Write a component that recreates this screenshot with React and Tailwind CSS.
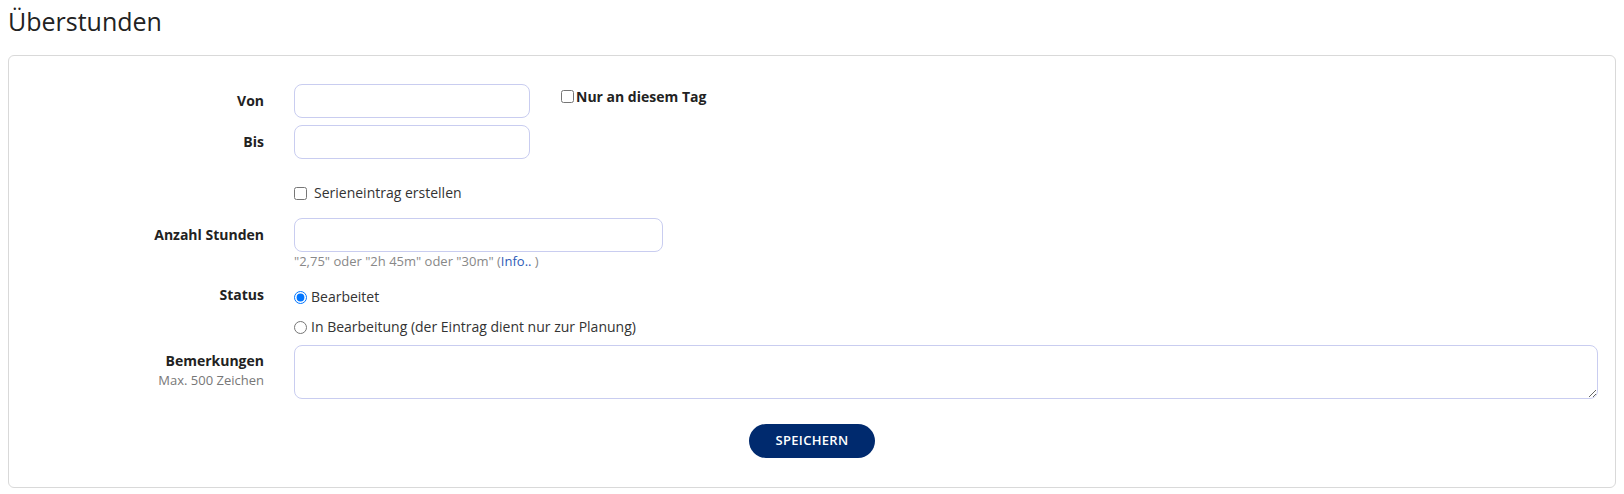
import React, { useState } from 'react';

const inputCls = 'h-[34px] rounded-lg border border-[#c9cdf0] bg-white px-3 text-sm outline-none focus:border-[#8f9be6]';

function Row({ label, sub, className = '', labelCls = 'pt-[7px]', children }) {
  return (
    <div className={`flex items-start ${className}`}>
      <div className={`w-[255px] shrink-0 text-right ${labelCls}`}>
        {label && <div className="text-[14px] font-bold leading-[20px] text-[#222]">{label}</div>}
        {sub && <div className="text-[13px] leading-[18px] text-[#777]">{sub}</div>}
      </div>
      <div className="ml-[30px] min-w-0 flex-1">{children}</div>
    </div>
  );
}

export default function App() {
  const [status, setStatus] = useState('done');

  return (
    <div className="min-h-screen bg-white font-['Open_Sans',sans-serif] text-[#333]">
      <h1 className="px-2 pt-[5px] text-[25px] font-normal leading-[32px] text-[#222]">Überstunden</h1>

      <div className="mx-2 mt-[18px] rounded-md border border-[#d9d9d9] pt-[28px] pb-[29px] pr-[17px]">
        {/* Von / Bis */}
        <Row label="Von">
          <div className="flex items-start">
            <input type="text" className={`${inputCls} w-[236px]`} />
            <label className="ml-[31px] mt-[2px] flex items-center gap-[2px] text-[14px] font-bold text-[#222]">
              <input type="checkbox" className="m-0 h-[13px] w-[13px]" />
              Nur an diesem Tag
            </label>
          </div>
        </Row>
        <Row label="Bis" className="mt-[7px]">
          <input type="text" className={`${inputCls} w-[236px]`} />
        </Row>

        <Row className="mt-[24px]" labelCls="">
          <label className="flex items-center gap-[7px] text-[14px] leading-[20px] text-[#333]">
            <input type="checkbox" className="m-0 h-[13px] w-[13px]" />
            Serieneintrag erstellen
          </label>
        </Row>

        <Row label="Anzahl Stunden" className="mt-[15px]">
          <input type="text" className={`${inputCls} w-[369px]`} />
          <div className="text-[13px] leading-[18px] text-[#888]">
            "2,75" oder "2h 45m" oder "30m" (<a href="#" className="text-[#2f5bb7]">Info.. </a>)
          </div>
        </Row>

        <Row label="Status" className="mt-[15px]" labelCls="">
          <div className="flex flex-col gap-[10px] pt-[2px]">
            <label className="flex items-center gap-[4px] text-[14px] leading-[20px] text-[#333]">
              <input
                type="radio"
                name="status"
                className="m-0 h-[13px] w-[13px]"
                checked={status === 'done'}
                onChange={() => setStatus('done')}
              />
              Bearbeitet
            </label>
            <label className="flex items-center gap-[4px] text-[14px] leading-[20px] text-[#333]">
              <input
                type="radio"
                name="status"
                className="m-0 h-[13px] w-[13px]"
                checked={status === 'plan'}
                onChange={() => setStatus('plan')}
              />
              In Bearbeitung (der Eintrag dient nur zur Planung)
            </label>
          </div>
        </Row>

        <Row label="Bemerkungen" sub="Max. 500 Zeichen" className="mt-[8px]" labelCls="pt-[6px]">
          <textarea className="block h-[54px] w-full rounded-lg border border-[#c9cdf0] bg-white px-3 py-1 text-sm outline-none" />
        </Row>

        <div className="mt-[25px] flex justify-center pl-[17px]">
          <button className="h-[34px] w-[126px] rounded-full bg-[#002a6e] text-[13px] font-semibold uppercase tracking-wide text-white">
            Speichern
          </button>
        </div>
      </div>
    </div>
  );
}
